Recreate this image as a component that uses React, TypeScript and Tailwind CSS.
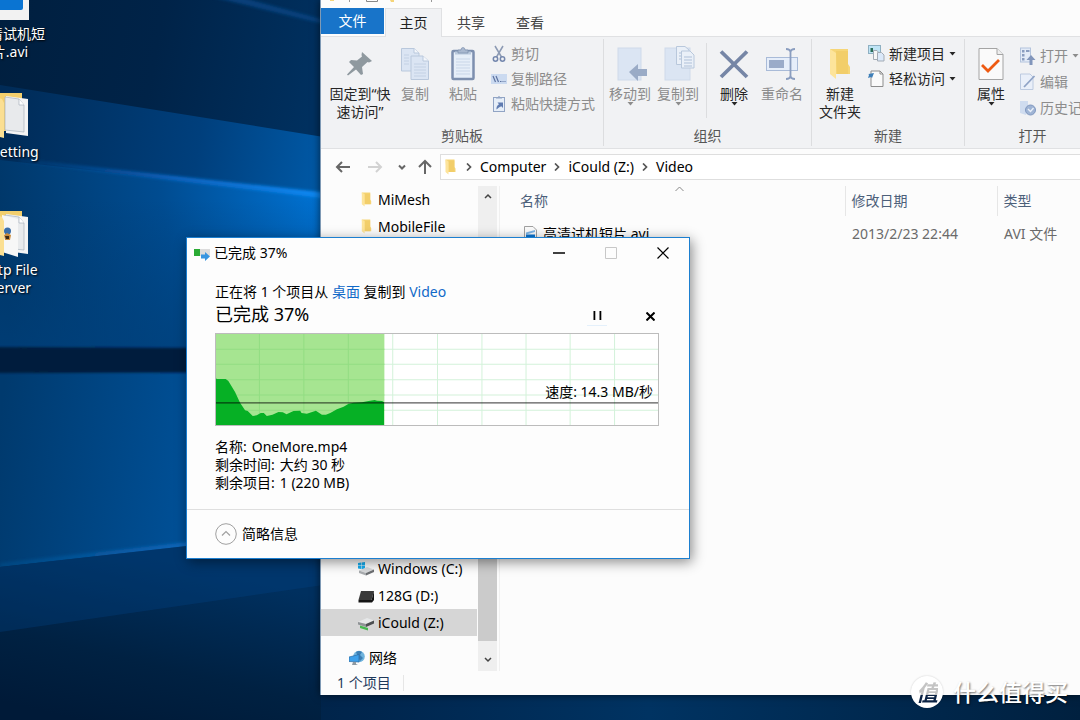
import type { ReactNode } from "react";

function Wallpaper() {
  return (
    <svg className="absolute inset-0 h-full w-full" viewBox="0 0 1080 720" preserveAspectRatio="none" aria-hidden="true">
      <defs>
        <linearGradient id="sky" x1="0" y1="0" x2="320" y2="60" gradientUnits="userSpaceOnUse">
          <stop offset="0" stopColor="#001f3f" />
          <stop offset="0.5" stopColor="#002348" />
          <stop offset="1" stopColor="#00305f" />
        </linearGradient>
        <linearGradient id="upper" x1="0" y1="120" x2="330" y2="160" gradientUnits="userSpaceOnUse">
          <stop offset="0" stopColor="#002b57" />
          <stop offset="0.6" stopColor="#003f7c" />
          <stop offset="1" stopColor="#005aa8" />
        </linearGradient>
        <linearGradient id="middle" x1="0" y1="240" x2="330" y2="200" gradientUnits="userSpaceOnUse">
          <stop offset="0" stopColor="#003769" />
          <stop offset="0.5" stopColor="#004c91" />
          <stop offset="1" stopColor="#0074d6" />
        </linearGradient>
        <linearGradient id="middleFade" x1="0" y1="200" x2="0" y2="346" gradientUnits="userSpaceOnUse">
          <stop offset="0" stopColor="#003a70" stopOpacity="0" />
          <stop offset="1" stopColor="#003f79" stopOpacity="0.7" />
        </linearGradient>
        <linearGradient id="lower" x1="0" y1="420" x2="186" y2="440" gradientUnits="userSpaceOnUse">
          <stop offset="0" stopColor="#003a6e" />
          <stop offset="1" stopColor="#004f95" />
        </linearGradient>
        <linearGradient id="floor" x1="120" y1="550" x2="80" y2="720" gradientUnits="userSpaceOnUse">
          <stop offset="0" stopColor="#00305f" />
          <stop offset="0.6" stopColor="#002142" />
          <stop offset="1" stopColor="#001a38" />
        </linearGradient>
        <linearGradient id="beam" x1="20" y1="0" x2="330" y2="0" gradientUnits="userSpaceOnUse">
          <stop offset="0" stopColor="#0a4f9e" stopOpacity="0.2" />
          <stop offset="0.5" stopColor="#0a66c4" />
          <stop offset="1" stopColor="#0b8cf8" />
        </linearGradient>
        <linearGradient id="edge" x1="0" y1="0" x2="186" y2="0" gradientUnits="userSpaceOnUse">
          <stop offset="0" stopColor="#07508f" stopOpacity="0.5" />
          <stop offset="1" stopColor="#0a66ba" />
        </linearGradient>
        <linearGradient id="strip" x1="0" y1="0" x2="1080" y2="0" gradientUnits="userSpaceOnUse">
          <stop offset="0" stopColor="#001a38" />
          <stop offset="0.35" stopColor="#00264e" />
          <stop offset="0.6" stopColor="#003362" />
          <stop offset="1" stopColor="#00203f" />
        </linearGradient>
        <filter id="soft">
          <feGaussianBlur stdDeviation="1.5" />
        </filter>
        <filter id="softBand" x="-5%" y="-50%" width="110%" height="200%">
          <feGaussianBlur stdDeviation="1" />
        </filter>
      </defs>
      <rect width="1080" height="720" fill="url(#sky)" />
      <path d="M200 -6 340 28 340 24 230 -6Z" fill="#07498a" opacity="0.7" filter="url(#soft)" />
      <path d="M0 85 330 138 330 360 0 360Z" fill="url(#upper)" />
      <path d="M0 160 330 197 330 360 0 360Z" fill="url(#middle)" />
      <path d="M0 160 330 197 330 360 0 360Z" fill="url(#middleFade)" />
      <path d="M20 159 330 193 330 199 20 162Z" fill="url(#beam)" filter="url(#soft)" />
      <path d="M0 366H330V530L0 567Z" fill="url(#lower)" />
      <path d="M0 563 330 526V532L0 568Z" fill="url(#edge)" filter="url(#soft)" />
      <path d="M0 567 330 530V720H0Z" fill="url(#floor)" />
      <path d="M0 567 330 530V584L0 632Z" fill="#00478a" opacity="0.3" />
      <path d="M-10 347 400 349V372L-10 373Z" fill="#001c3d" filter="url(#softBand)" />
      <rect x="321" y="690" width="759" height="30" fill="url(#strip)" />
    </svg>
  );
}

function Folder({ className }: { className: string }) {
  return (
    <svg className={className} viewBox="0 0 22 32" aria-hidden="true">
      <path d="M1 1H19V16L21 19V26H3Z" fill="#f6d678" />
      <path d="M7 3H19V26H8Z" fill="#eec95f" opacity="0.55" />
      <path d="M1 1 7 5V31L1 26Z" fill="#fde49b" />
    </svg>
  );
}

function DesktopFolder({ picture }: { picture?: boolean }) {
  return (
    <svg className="h-12 w-12" viewBox="0 0 48 48" aria-hidden="true">
      <path d="M0 2H36V40H0Z" fill="#f3cf6d" />
      <path d="M20 5 42 8V45L20 42Z" fill="#f4f4f4" />
      <path d="M19 6 33 8 38 14V41L19 39Z" fill="#e8eaec" stroke="#a9b3bd" strokeWidth="0.7" />
      <path d="M33 8V14H38" fill="#fff" stroke="#a9b3bd" strokeWidth="0.7" />
      {picture && (
        <>
          <path d="M16 6 32 10V48L16 43Z" fill="#f7f7f7" />
          <circle cx="21.500" cy="22" r="3.500" fill="#3b6ea8" />
          <path d="M18 26 21 24 25 26 24 31H19Z" fill="#c98a3c" />
          <path d="M19 27H23V30H20Z" fill="#3a2a1a" />
        </>
      )}
      <path d="M0 2 16 8 18 12V47L0 42Z" fill="#fbdf92" />
    </svg>
  );
}

function VideoFileLarge() {
  return (
    <svg className="h-12 w-12" viewBox="0 0 48 48" aria-hidden="true">
      <path d="M0 0H43V47H0Z" fill="#f2f2f2" />
      <path d="M0 10H36Q37 10 37 12V35Q37 37 35 37H0Z" fill="#0a74d2" />
    </svg>
  );
}

function DesktopItem({ icon, lines }: { icon: ReactNode; lines: string[] }) {
  return (
    <li className="flex h-[118px] flex-col items-center gap-1">
      {icon}
      <span className="text-center leading-[18px] whitespace-pre text-white [text-shadow:1px_1px_2px_#000]">
        {lines.map((l) => (
          <span key={l} className="block">{l}</span>
        ))}
      </span>
    </li>
  );
}

function Caret({ className = "" }: { className?: string }) {
  return (
    <svg className={"h-1 w-[7px] " + className} viewBox="0 0 7 4" aria-hidden="true">
      <path d="M0.500 0H6.500L3.500 3.500Z" fill="currentColor" />
    </svg>
  );
}

const pale = "#dbe5f3";
const line = "#b9c8dc";
const slate = "#7d8fae";

const icons = {
  pin: (
    <svg viewBox="0 0 32 32" className="h-8 w-8" aria-hidden="true">
      <path d="M18 4 28 13 25 14.500 23.500 14 18 19 19 26 17 27 12 21.500 4 27.500 3 26.500 10 19 5 14 7 12 13 12.500 18 8.500 17.500 7Z" fill="#8f999f" />
    </svg>
  ),
  copy: (
    <svg viewBox="0 0 32 34" className="h-[34px] w-8" aria-hidden="true">
      <path d="M2.500 1.500H15L20 6V24H2.500Z" fill={pale} stroke={line} />
      <path d="M12 9H24L29.500 14V32.500H12Z" fill={pale} stroke={line} />
      <path d="M15 1.500V6H20M24 9V14H29.500" fill="#f4f7fb" stroke={line} />
      <path d="M5 8H10M5 11H10M5 14H10M5 17H10M15 17H27M15 20H27M15 23H27M15 26H27M15 29H27" stroke="#c3d1e4" />
    </svg>
  ),
  paste: (
    <svg viewBox="0 0 28 34" className="h-[34px] w-7" aria-hidden="true">
      <rect x="3.500" y="4" width="21" height="28" rx="1" fill="#e6eef8" stroke={slate} strokeWidth="2.500" />
      <path d="M6 6H22" stroke="#b9c8dc" strokeWidth="3" />
      <path d="M9 6V3H12Q12 0.500 14 0.500T16 3H19V6Z" fill="#a9b8cf" stroke={slate} strokeWidth="0.700" />
      <path d="M7 12H21M7 15H21M7 18H21M7 21H21M7 24H21M7 27H21" stroke="#c9d6e8" />
    </svg>
  ),
  moveTo: (
    <svg viewBox="0 0 34 36" className="h-9 w-[34px]" aria-hidden="true">
      <rect x="5" y="2" width="23" height="32" fill={pale} stroke="#cfdaea" />
      <path d="M16 26 25 18V23H34V30H25V35Z" fill="#9aabc6" />
    </svg>
  ),
  copyTo: (
    <svg viewBox="0 0 34 36" className="h-9 w-[34px]" aria-hidden="true">
      <rect x="4" y="2" width="25" height="32" fill={pale} stroke="#cfdaea" />
      <path d="M15.500 0.500H24L28 4V18.500H15.500Z" fill="#eaf0f8" stroke={line} />
      <path d="M20.500 5H29L33 9V22H20.500Z" fill="#eaf0f8" stroke={line} />
      <path d="M18 7H20M18 10H20M18 13H20M23 11H31M23 14H31M23 17H31M23 20H31" stroke="#afc0d8" />
    </svg>
  ),
  remove: (
    <svg viewBox="0 0 30 30" className="h-[30px] w-[30px]" aria-hidden="true">
      <path d="M2 2.500 28 28M28 2.500 2 28" stroke="#7686a6" strokeWidth="3.800" />
    </svg>
  ),
  rename: (
    <svg viewBox="0 0 34 32" className="h-8 w-[34px]" aria-hidden="true">
      <rect x="1.500" y="9.500" width="31" height="13" fill="#e6eefa" stroke="#a9bbd8" />
      <rect x="4" y="12" width="15" height="8" fill="#9aabc9" />
      <path d="M25.500 2V30M21 1Q25 1 25.500 4 26 1 30 1M21 31Q25 31 25.500 28 26 31 30 31" fill="none" stroke="#8a9dbf" strokeWidth="1.800" />
    </svg>
  ),
  properties: (
    <svg viewBox="0 0 26 34" className="h-[34px] w-[26px]" aria-hidden="true">
      <path d="M1 1.500H19L25 7.500V32.500H1Z" fill="#fafafa" stroke="#a4a4a4" />
      <path d="M19 1.500V7.500H25" fill="#eee" stroke="#a4a4a4" />
      <path d="M4 18 10 24 21 13" fill="none" stroke="#ee5a12" strokeWidth="2.800" />
    </svg>
  ),
  cut: (
    <svg viewBox="0 0 16 18" className="h-[18px] w-4" aria-hidden="true">
      <path d="M4 1 10.500 12M12 1 5.500 12" stroke="#8c9ab3" strokeWidth="1.500" />
      <circle cx="4.500" cy="14" r="2.200" fill="none" stroke="#7487ad" strokeWidth="1.500" />
      <circle cx="11.500" cy="14" r="2.200" fill="none" stroke="#7487ad" strokeWidth="1.500" />
    </svg>
  ),
  path: (
    <svg viewBox="0 0 16 16" className="h-4 w-4" aria-hidden="true">
      <rect x="0" y="3" width="16" height="10" fill="#cbdaf0" />
      <path d="M2 5 4.500 11M5 5 7.500 11M9 10.500H10.500M11.500 10.500H12.500M13.500 10.500H14.500" stroke="#5c72a0" strokeWidth="1.200" />
    </svg>
  ),
  shortcut: (
    <svg viewBox="0 0 16 18" className="h-[18px] w-4" aria-hidden="true">
      <rect x="2.500" y="2.500" width="11" height="14" fill="#e6eef8" stroke="#91a4c4" />
      <path d="M5 3.500V2H7Q8 0 9 2H11V3.500Z" fill="#91a4c4" />
      <path d="M5.500 14.500Q5 11 8 9.200L6.500 7.500H12V13L10.300 11.300Q8 12 5.500 14.500Z" fill="#5f7bb0" />
    </svg>
  ),
  newItem: (
    <svg viewBox="0 0 17 17" className="h-[17px] w-[17px]" aria-hidden="true">
      <rect x="0.500" y="0.500" width="12" height="8" fill="#bfe4f5" stroke="#8fb0c2" />
      <path d="M2.500 3H5V7H2.500Z" fill="#2a6d58" />
      <path d="M5.500 5.500H9L11 8V14.500H5.500Z" fill="#f6f6f6" stroke="#a3abb5" />
      <path d="M9.500 7.500H13.500L16 10V16H9.500Z" fill="#dbe9fa" stroke="#a3abb5" />
    </svg>
  ),
  easy: (
    <svg viewBox="0 0 17 18" className="h-[18px] w-[17px]" aria-hidden="true">
      <path d="M3 1H12L15 4V16.500H3Z" fill="#fafafa" stroke="#8d8d8d" />
      <path d="M12 1V4H15" fill="none" stroke="#8d8d8d" />
      <path d="M0 8 1 5 0.500 4 6 3 4 8 3 7Z" fill="#3e7fb8" />
    </svg>
  ),
  open: (
    <svg viewBox="0 0 17 18" className="h-[18px] w-[17px]" aria-hidden="true">
      <rect x="1.500" y="1" width="10" height="14" fill="#e3ebf7" stroke="#b4c4dd" />
      <path d="M3 3H5.500V5.500H3ZM3 7H5.500V9.500H3ZM3 11H5.500V13.500H3ZM7 3H10.500V5H7Z" fill="#8a9dbf" />
      <path d="M12 8 16.500 13H13.500V18H10.500V13H7.500Z" fill="#8296bb" />
    </svg>
  ),
  edit: (
    <svg viewBox="0 0 17 18" className="h-[18px] w-[17px]" aria-hidden="true">
      <path d="M1.500 1H11L14 4V16.500H1.500Z" fill="#e9eff9" stroke="#bccae0" />
      <path d="M5 14 15.500 3" stroke="#8fa3c6" strokeWidth="1.800" />
    </svg>
  ),
  history: (
    <svg viewBox="0 0 17 18" className="h-[18px] w-[17px]" aria-hidden="true">
      <path d="M1 2H9V10L7 16 1 14Z" fill="#cfdcef" />
      <circle cx="11.500" cy="11" r="5" fill="#9fb4d4" stroke="#8098c0" />
      <path d="M9 10 11.500 12.500 14.500 9" fill="none" stroke="#e9f0fa" strokeWidth="1.400" />
    </svg>
  ),
};

function BigButton({ icon, lines, off, menu, wide }: { icon: ReactNode; lines: string[]; off?: boolean; menu?: boolean; wide?: boolean }) {
  return (
    <button
      type="button"
      className={"relative flex shrink-0 flex-col items-center pt-1 " + (wide ? "w-[62px] " : "w-12 ") + (off ? "text-[#8c8c8c]" : "text-[#262626]")}
    >
      <span className="flex h-[42px] items-center">{icon}</span>
      {lines.map((l) => (
        <span key={l} className="leading-[18px] whitespace-nowrap">{l}</span>
      ))}
      {menu && <Caret className="absolute top-[63px]" />}
    </button>
  );
}

function SmallButton({ icon, label, off, menu }: { icon: ReactNode; label: string; off?: boolean; menu?: boolean }) {
  return (
    <button type="button" className={"flex h-[25px] items-center gap-1 whitespace-nowrap " + (off ? "text-[#8c8c8c]" : "text-[#262626]")}>
      {icon}
      {label}
      {menu && <Caret />}
    </button>
  );
}

function Group({ label, children }: { label: string; children: ReactNode }) {
  return (
    <section className="flex shrink-0 flex-col border-r border-[#dcdddf]" aria-label={label}>
      <div className="flex h-[87px]">{children}</div>
      <h2 className="text-center leading-5 text-[#555]">{label}</h2>
    </section>
  );
}

function Ribbon() {
  return (
    <div className="flex border-y border-[#e0e1e3] bg-[#f1f2f4] py-[2px]">
      <Group label="剪贴板">
        <div className="flex pr-2 pl-2">
          <BigButton wide icon={icons.pin} lines={["固定到“快", "速访问”"]} />
          <BigButton off icon={icons.copy} lines={["复制"]} />
          <BigButton off icon={icons.paste} lines={["粘贴"]} />
          <div className="flex flex-col pt-[2px] pl-1">
            <SmallButton off icon={icons.cut} label="剪切" />
            <SmallButton off icon={icons.path} label="复制路径" />
            <SmallButton off icon={icons.shortcut} label="粘贴快捷方式" />
          </div>
        </div>
      </Group>
      <Group label="组织">
        <div className="flex pr-[5px] pl-[2px]">
          <BigButton off menu icon={icons.moveTo} lines={["移动到"]} />
          <BigButton off menu icon={icons.copyTo} lines={["复制到"]} />
          <span className="mr-[3px] ml-1 mt-1 mb-2 w-px bg-[#dcdddf]" />
          <BigButton menu icon={icons.remove} lines={["删除"]} />
          <BigButton off icon={icons.rename} lines={["重命名"]} />
        </div>
      </Group>
      <Group label="新建">
        <div className="flex pr-2 pl-1">
          <BigButton icon={<Folder className="h-8 w-[22px]" />} lines={["新建", "文件夹"]} />
          <div className="flex flex-col pt-[2px] pl-1">
            <SmallButton menu icon={icons.newItem} label="新建项目" />
            <SmallButton menu icon={icons.easy} label="轻松访问" />
          </div>
        </div>
      </Group>
      <Group label="打开">
        <div className="flex pr-1 pl-[2px]">
          <BigButton menu icon={icons.properties} lines={["属性"]} />
          <div className="flex flex-col gap-px pt-1 pl-1">
            <SmallButton off menu icon={icons.open} label="打开" />
            <SmallButton off icon={icons.edit} label="编辑" />
            <SmallButton off icon={icons.history} label="历史记录" />
          </div>
        </div>
      </Group>
    </div>
  );
}

function Arrow({ d, className = "" }: { d: string; className?: string }) {
  return (
    <svg className={"h-4 w-4 " + className} viewBox="0 0 16 16" fill="none" stroke="currentColor" strokeWidth="2" aria-hidden="true">
      <path d={d} />
    </svg>
  );
}

function Crumb({ label }: { label: string }) {
  return (
    <>
      <svg className="h-2 w-[6px] shrink-0 text-[#555]" viewBox="0 0 6 8" fill="none" stroke="currentColor" strokeWidth="1.700" aria-hidden="true">
        <path d="M1 0.500 4.500 4 1 7.500" />
      </svg>
      <button type="button">{label}</button>
    </>
  );
}

function AddressBar() {
  return (
    <div className="flex items-center pt-[5px] pb-[6px] pl-[14px] text-[#666]">
      <button type="button" aria-label="后退">
        <Arrow d="M15 8H2M7 3 2 8 7 13" />
      </button>
      <button type="button" aria-label="前进" className="ml-4 text-[#d2d2d2]">
        <Arrow d="M1 8H14M9 3 14 8 9 13" />
      </button>
      <button type="button" aria-label="最近位置" className="ml-[11px]">
        <Arrow d="M5 6.500 8 9.500 11 6.500" />
      </button>
      <button type="button" aria-label="上移" className="ml-[7px]">
        <Arrow d="M8 15V2M2 8 8 2 14 8" />
      </button>
      <nav className="ml-[7px] flex h-[26px] flex-1 items-center gap-2 border border-r-0 border-[#dedede] bg-white pl-1 text-black">
        <Folder className="mr-[2px] h-4 w-[11px]" />
        <Crumb label="Computer" />
        <Crumb label="iCould (Z:)" />
        <Crumb label="Video" />
      </nav>
    </div>
  );
}

const driveC = (
  <svg className="h-4 w-4" viewBox="0 0 16 16" aria-hidden="true">
    <path d="M0 2 3 1.500V4.500H0ZM3.500 1.500 7 1V4.500H3.500ZM0 5H3V8L0 7.500ZM3.500 5H7V8.500L3.500 8Z" fill="#18aef0" />
    <path d="M1 9.500 9 6 16 8.500 8 12Z" fill="#d9dbdd" />
    <path d="M1 9.500 8 12V14.500L1 12Z" fill="#a9adb0" />
    <path d="M8 12 16 8.500V11L8 14.500Z" fill="#6c6f72" />
  </svg>
);
const driveD = (
  <svg className="h-4 w-4" viewBox="0 0 16 16" aria-hidden="true">
    <path d="M3 3H16L13.500 12H0.500Z" fill="#3a3a3a" />
    <path d="M0.500 12H13.500L16 3V12L14 14.500H0.500Z" fill="#151515" />
  </svg>
);
const driveZ = (
  <svg className="h-4 w-4" viewBox="0 0 16 16" aria-hidden="true">
    <path d="M0 7 9 3 16 5.500 8 9Z" fill="#e6e8e9" />
    <path d="M0 7 8 9V12L0 9.500Z" fill="#8f9396" />
    <path d="M8 9 16 5.500V8.500L8 12Z" fill="#4c4f51" />
    <path d="M2 10.500 10 13V15.500L2 13Z" fill="#46b850" />
  </svg>
);
const network = (
  <svg className="h-4 w-4" viewBox="0 0 16 16" aria-hidden="true">
    <circle cx="10" cy="6.500" r="5.800" fill="#6fb3dd" />
    <path d="M7 2Q10 0 13 2L11 5 14 8 11 11 9 7Z" fill="#3d7fb4" />
    <path d="M0 7 10 4.500V12L0 11.500Z" fill="#3ea0ea" stroke="#2b6ca3" strokeWidth="0.700" />
    <path d="M4 12H7V14L9 15H3Z" fill="#8e9aa3" />
  </svg>
);

function TreeRow({ icon, label, root, selected }: { icon: ReactNode; label: string; root?: boolean; selected?: boolean }) {
  return (
    <li>
      <button
        type="button"
        className={"flex h-[27px] w-full items-center gap-1 whitespace-nowrap text-black " + (root ? "pl-7 " : "pl-[37px] ") + (selected ? "bg-[#d6d6d6]" : "")}
      >
        {icon}
        {label}
      </button>
    </li>
  );
}

function Explorer() {
  const small = (
    <span className="flex w-4 justify-center">
      <Folder className="h-[15px] w-[11px]" />
    </span>
  );
  return (
    <main className="absolute inset-y-0 right-0 left-[320px] mb-[25px] flex flex-col overflow-hidden border-l border-[#7f9ab5] bg-[#fcfcfc] shadow-[0_0_8px_rgba(0,0,0,0.6)]">
      <header className="flex h-2 items-start">
        <svg className="h-[3px] w-[130px]" viewBox="0 0 130 3" aria-hidden="true">
          <path d="M9 0H13V1H9ZM69 0H73V2H70Z" fill="#f5d478" />
          <path d="M28 0H29V2H28ZM110 0H111V2H110Z" fill="#999" />
          <path d="M45.500 0V1.500H56.500V0" fill="none" stroke="#888" />
        </svg>
      </header>
      <div className="relative z-10 -mb-px flex text-[#444]" role="tablist">
        <button type="button" role="tab" className="h-[26px] w-[63px] bg-[#1874c9] text-white">文件</button>
        <button type="button" role="tab" aria-selected="true" className="ml-px h-[29px] w-[57px] border border-b-0 border-[#e0e1e3] bg-[#f1f2f4] text-[#222]">主页</button>
        <button type="button" role="tab" className="h-[29px] w-[58px]">共享</button>
        <button type="button" role="tab" className="h-[29px] w-[60px]">查看</button>
      </div>
      <Ribbon />
      <AddressBar />
      <div className="flex min-h-0 flex-1">
        <nav className="flex w-[156px] shrink-0 flex-col justify-between" aria-label="导航">
          <ul>
            <TreeRow icon={small} label="MiMesh" />
            <TreeRow icon={small} label="MobileFile" />
          </ul>
          <ul>
            <TreeRow icon={driveC} label="Windows (C:)" />
            <TreeRow icon={driveD} label="128G (D:)" />
            <TreeRow icon={driveZ} label="iCould (Z:)" selected />
            <li className="h-2" />
            <TreeRow root icon={network} label="网络" />
          </ul>
        </nav>
        <div className="mr-[2px] ml-px flex w-[19px] shrink-0 flex-col bg-[#efefef] text-[#444]">
          <button type="button" aria-label="向上" className="flex h-5 items-center justify-center">
            <Arrow className="[stroke-width:1.5]" d="M5 10 8 7 11 10" />
          </button>
          <div className="flex flex-1 flex-col justify-end">
            <div className="h-1/2 bg-[#cbcbcb]" />
          </div>
          <button type="button" aria-label="向下" className="flex h-[30px] items-center justify-center pt-2">
            <Arrow className="[stroke-width:1.5]" d="M5 6 8 9 11 6" />
          </button>
        </div>
        <div className="relative min-w-0 flex-1 border-l border-[#f0f0f0]">
          <svg className="absolute top-0 left-[175px] h-[6px] w-[9px]" viewBox="0 0 9 6" fill="none" stroke="#888" aria-hidden="true">
            <path d="M0.500 5 4.500 1 8.500 5" />
          </svg>
          <table className="w-full table-fixed text-left">
            <thead className="text-[#4c607a]">
              <tr className="h-[30px]">
                <th className="w-[345px] pl-5 font-normal">名称</th>
                <th className="w-[152px] border-l border-[#e6e6e6] pl-[6px] font-normal">修改日期</th>
                <th className="border-l border-[#e6e6e6] pl-[6px] font-normal">类型</th>
              </tr>
            </thead>
            <tbody>
              <tr className="h-9 text-[#6a6a6a]">
                <td className="pl-6 text-black">
                  <span className="flex items-center gap-[6px]">
                    <svg className="h-4 w-[13px]" viewBox="0 0 13 16" aria-hidden="true">
                      <path d="M0.500 0.500H9L12.500 4V15.500H0.500Z" fill="#fafafa" stroke="#a0a0a0" />
                      <path d="M2 6.500 11 4V6L2 8.500Z" fill="#7db4e6" />
                      <path d="M2 8.500H11V13H2Z" fill="#0a74d2" />
                    </svg>
                    高清试机短片.avi
                  </span>
                </td>
                <td className="pl-[7px]">2013/2/23 22:44</td>
                <td className="pl-[7px]">AVI 文件</td>
              </tr>
            </tbody>
          </table>
        </div>
      </div>
      <footer className="flex h-6 shrink-0 items-center pl-4 text-[#1e395b]">
        <span className="border-r border-[#e6e6e6] pr-3 leading-4">1 个项目</span>
      </footer>
    </main>
  );
}

const speed =
  "M92 567V427L96 429H122L130 435 150 468 165 500 180 523 188 525 203 540 215 538 227 531H236L245 540 262 536 280 528 293 529 304 535 325 525 345 524 349 531 365 533 392 524 410 536H422L435 531 455 520 475 512 490 503 505 500 530 499 550 495 568 492 575 494 590 495 596 499V567Z";

function SpeedChart() {
  return (
    <div className="relative mt-[7px]">
      <svg className="block h-[93px] w-full" viewBox="90 291 1329 279" preserveAspectRatio="none" role="img" aria-label="速度">
        <rect x="90" y="291" width="1329" height="279" fill="#fff" />
        <g stroke="#d3f2da" strokeWidth="3">
          {[223, 356, 489, 622, 756, 889, 1021, 1153, 1286].map((x) => (
            <path key={x} d={`M${x} 291V570`} />
          ))}
          {[340, 385, 431, 477, 523].map((y) => (
            <path key={y} d={`M90 ${y}H1419`} />
          ))}
        </g>
        <rect x="92" y="293" width="505" height="276" fill="#a6e591" />
        <g stroke="#92dd83" strokeWidth="3">
          <path d="M223 293V569M356 293V569M489 293V569M92 340H597M92 385H597M92 431H597M92 477H597M92 523H597" />
        </g>
        <path d={speed} fill="#06b025" />
        <path d="M90 500.500H1419" stroke="#000" strokeOpacity="0.650" strokeWidth="4" />
        <rect x="91.500" y="292.500" width="1326" height="276" fill="none" stroke="#bcbcbc" strokeWidth="3" />
      </svg>
      <span className="absolute right-[6px] bottom-[25px] leading-[18px]">速度: 14.3 MB/秒</span>
    </div>
  );
}

function CopyDialog() {
  return (
    <section
      role="dialog"
      aria-label="已完成 37%"
      className="absolute top-[237px] left-[186px] z-20 w-[504px] border border-[#1c7fd0] bg-[#fdfdfd] text-black shadow-[2px_3px_12px_rgba(0,0,0,0.45)]"
    >
      <header className="flex h-[30px] items-center pl-[6px]">
        <svg className="mr-[3px] h-4 w-[18px]" viewBox="0 0 18 16" aria-hidden="true">
          <rect x="1" y="4" width="16" height="7" fill="#dcdcdc" />
          <rect x="1" y="4" width="6" height="7" fill="#2bab35" />
          <path d="M8 9.500H12V7L17 11.500 12 16V13.500H8Z" fill="#3795e0" />
        </svg>
        <h1 className="flex-1">已完成 37%</h1>
        <button type="button" aria-label="最小化" className="flex w-[52px] justify-center">
          <Arrow d="M2 8H14" className="[stroke-width:1.5]" />
        </button>
        <button type="button" aria-label="最大化" className="flex w-[51px] justify-center text-[#c8c8c8]">
          <Arrow d="M2.500 2.500H13.500V13.500H2.500Z" className="[stroke-width:1]" />
        </button>
        <button type="button" aria-label="关闭" className="flex w-[53px] justify-center">
          <Arrow d="M2.500 2.500 13.500 13.500M13.500 2.500 2.500 13.500" className="[stroke-width:1.2]" />
        </button>
      </header>
      <div className="pt-[14px] pr-[30px] pb-[17px] pl-7">
        <p className="leading-5">
          正在将 1 个项目从 <a href="#desktop" className="text-[#1169c8]">桌面</a> 复制到 <a href="#video" className="text-[#1169c8]">Video</a>
        </p>
        <div className="flex items-center">
          <p className="flex-1 text-lg leading-6">已完成 37%</p>
          <button type="button" aria-label="暂停" className="mt-1 mr-[38px] flex h-5 w-5 items-center justify-center border-b border-[#e4f0fb]">
            <svg className="h-[9px] w-[9px]" viewBox="0 0 9 9" aria-hidden="true">
              <path d="M0.500 0H2.300V9H0.500ZM6.500 0H8.300V9H6.500Z" />
            </svg>
          </button>
          <button type="button" aria-label="取消" className="mt-1 mr-1 flex w-[10px] justify-center">
            <svg className="h-[9px] w-[9px]" viewBox="0 0 9 9" stroke="#000" strokeWidth="2" aria-hidden="true">
              <path d="M0.500 0.500 8.500 8.500M8.500 0.500 0.500 8.500" />
            </svg>
          </button>
        </div>
        <SpeedChart />
        <dl className="mt-3 leading-[18px]">
          <div className="flex gap-[5px]"><dt>名称:</dt><dd>OneMore.mp4</dd></div>
          <div className="flex gap-[5px]"><dt>剩余时间:</dt><dd>大约 30 秒</dd></div>
          <div className="flex gap-[5px]"><dt>剩余项目:</dt><dd>1 (220 MB)</dd></div>
        </dl>
      </div>
      <footer className="border-t border-[#dfdfdf] py-[13px] pl-7">
        <button type="button" className="flex items-center gap-[5px]">
          <svg className="h-[22px] w-[22px]" viewBox="0 0 22 22" fill="none" stroke="#a0a0a0" aria-hidden="true">
            <circle cx="11" cy="11" r="10.300" />
            <path d="M7 12.500 11 8.500 15 12.500" strokeWidth="1.200" />
          </svg>
          简略信息
        </button>
      </footer>
    </section>
  );
}

export default function App() {
  return (
    <div className="relative h-screen w-full overflow-hidden bg-[#00203f] font-['Noto_Sans','Noto_Sans_CJK_SC',sans-serif] text-sm" lang="zh-CN">
      <Wallpaper />
      <ul className="absolute -top-[27px] -left-[32px] w-[84px]">
        <DesktopItem icon={<VideoFileLarge />} lines={["高清试机短", "片.avi"]} />
        <DesktopItem icon={<DesktopFolder />} lines={["\u00a0\u00a0\u00a0Setting"]} />
        <DesktopItem icon={<DesktopFolder picture />} lines={["Http File", "Server"]} />
      </ul>
      <Explorer />
      <CopyDialog />
      <div className="absolute right-3 bottom-3 z-30 flex items-center gap-[10px]">
        <span className="flex h-8 w-8 items-center justify-center rounded-full bg-white shadow-[0_0_2px_rgba(0,0,0,0.2)]">
          <span className="bg-linear-to-b from-[#c4c4c4] from-60% to-[#0a2244] to-60% bg-clip-text text-[22px] leading-7 font-bold text-transparent italic">值</span>
        </span>
        <span className="text-[23px] leading-8 font-medium text-white [text-shadow:1px_1px_2px_rgba(0,0,0,0.55)]">什么值得买</span>
      </div>
    </div>
  );
}
